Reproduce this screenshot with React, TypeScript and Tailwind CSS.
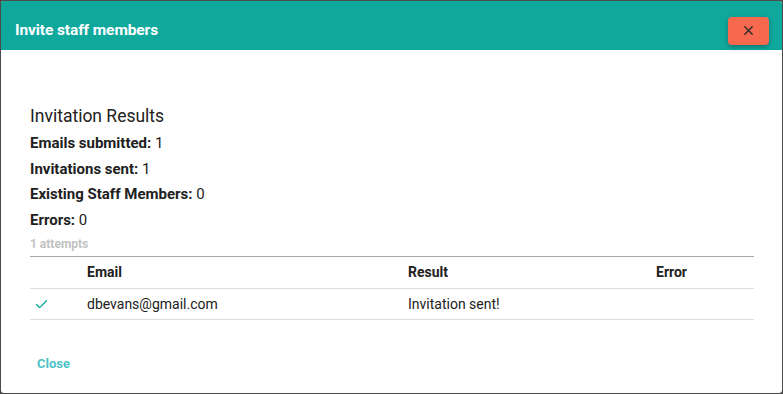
import { X, Check } from 'lucide-react';

const STATS = [
  { label: 'Emails submitted:', value: 1 },
  { label: 'Invitations sent:', value: 1 },
  { label: 'Existing Staff Members:', value: 0 },
  { label: 'Errors:', value: 0 },
];

const RESULTS = [{ email: 'dbevans@gmail.com', result: 'Invitation sent!', error: '' }];

export default function App() {
  return (
    <main
      className="w-[783px] h-[394px] bg-[#4b4b4b] p-px"
      style={{ fontFamily: 'Roboto, "Liberation Sans", sans-serif' }}
    >
      <div className="h-full bg-white rounded-[3px] overflow-hidden flex flex-col">
        {/* Header */}
        <header className="h-[49px] bg-[#0fa89d] flex items-center justify-between pl-[14px] pr-[13px] shrink-0">
          <h2 className="text-white text-[15.5px] font-bold tracking-[-0.1px] mt-[10px]">Invite staff members</h2>
          <button
            className="w-[41px] h-[28px] mt-[10px] rounded-[4px] bg-[#f7694e] flex items-center justify-center shadow-[0_2px_5px_rgba(0,0,0,0.3)]"
            aria-label="Close"
          >
            <X size={15} strokeWidth={2.2} className="text-[#2b2b2b]" />
          </button>
        </header>

        {/* Body */}
        <section className="px-[29px] pt-[55px] text-[#212121]">
          <h3 className="text-[17.5px] leading-[22px] text-[#222]">Invitation Results</h3>
          <div className="mt-[4px] flex flex-col">
            {STATS.map((s) => (
              <p key={s.label} className="text-[15px] leading-[25.5px]">
                <span className="font-bold">{s.label}</span> {s.value}
              </p>
            ))}
          </div>
          <p className="text-[12px] font-bold text-[#c2c2c2] mt-[4px] leading-[15px]">1 attempts</p>

          <table className="w-[724px] mt-[4px] border-t border-[#a8a8a8] text-[14px] text-left">
            <thead>
              <tr className="h-[32px] border-b border-[#dedede]">
                <th className="w-[57px]"></th>
                <th className="w-[321px] font-bold">Email</th>
                <th className="w-[248px] font-bold">Result</th>
                <th className="font-bold">Error</th>
              </tr>
            </thead>
            <tbody>
              {RESULTS.map((r) => (
                <tr key={r.email} className="h-[31px] border-b border-[#dedede]">
                  <td className="pl-[4px]">
                    <Check size={15} strokeWidth={2.2} className="text-[#0fa89d]" />
                  </td>
                  <td>{r.email}</td>
                  <td>{r.result}</td>
                  <td>{r.error}</td>
                </tr>
              ))}
            </tbody>
          </table>
        </section>

        {/* Footer */}
        <footer className="px-[36px] mt-[31px]">
          <button className="text-[13px] font-bold text-[#4cc2c7]">Close</button>
        </footer>
      </div>
    </main>
  );
}
